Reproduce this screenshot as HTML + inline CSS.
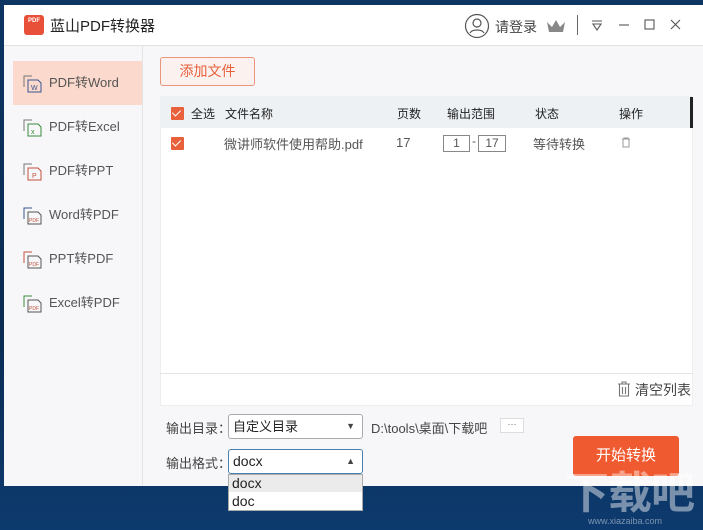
<!DOCTYPE html>
<html><head><meta charset="utf-8"><style>
*{margin:0;padding:0;box-sizing:border-box}
html,body{width:703px;height:530px;overflow:hidden}
body{background:linear-gradient(180deg,#0d3562 0%,#0a2b52 60%,#0d3a6e 100%);font-family:"Liberation Sans","Noto Sans CJK SC",sans-serif;position:relative;font-size:13px;color:#333}
.a{position:absolute}
.win{left:4px;top:5px;width:699px;height:481px;background:#f7f7f9}
.title{left:4px;top:5px;width:699px;height:41px;background:#fff;border-bottom:1px solid #e2e2e2}
.side{left:4px;top:46px;width:139px;height:440px;background:#f7f7f9;border-right:1px solid #e4e4e4}
.item{position:absolute;left:10px;width:128px;height:44px;font-size:13px;color:#555;line-height:44px;padding-left:39px}
.ic{position:absolute;left:12px;top:12px;width:21px;height:21px}
.cb{width:13px;height:13px;background:#e8603c;border-radius:1px}
.cb:after{content:"";position:absolute;left:3px;top:1px;width:4px;height:7px;border:solid #fff;border-width:0 1.5px 1.5px 0;transform:rotate(45deg)}
</style></head><body>
<div class="a win"></div>
<div class="a title"></div>
<div class="a" style="left:24px;top:15px;width:20px;height:20px;background:#e8503a;border-radius:3px;color:#fff;font-size:6px;text-align:center;line-height:12px;font-weight:bold">PDF</div>
<div class="a" style="left:50px;top:15px;font-size:15px;color:#222">蓝山PDF转换器</div>
<svg class="a" style="left:464px;top:13px" width="26" height="26" viewBox="0 0 26 26" fill="none" stroke="#555" stroke-width="1.2"><circle cx="13" cy="13" r="11.5"/><circle cx="13" cy="10" r="4"/><path d="M6 20c2-4 12-4 14 0"/></svg>
<div class="a" style="left:495px;top:17px;font-size:14px;color:#444">请登录</div>
<svg class="a" style="left:545px;top:17px" width="22" height="18" viewBox="0 0 22 18"><path d="M2 5l5 5 4-7 4 7 5-5-2 10H4z" fill="#888"/></svg>
<div class="a" style="left:577px;top:15px;width:1px;height:20px;background:#666"></div>
<svg class="a" style="left:590px;top:18px" width="100" height="14" viewBox="0 0 100 14" fill="none" stroke="#555" stroke-width="1.1"><path d="M2 3h10M3 6h8l-4 6z"/><path d="M29 7h10"/><rect x="55" y="2" width="9" height="9"/><path d="M81 2l9 9M90 2l-9 9"/></svg>
<div class="a side"></div>
<div class="a" style="left:13px;top:61px;width:129px;height:44px;background:#fbd9cc"></div>
<div class="item" style="top:61px">PDF转Word<svg class="ic" viewBox="0 0 21 21" fill="none" stroke-width="1"><path d="M2 14V3h8" stroke="#777"/><path d="M6 7h10l3 3v9H6z" stroke="#3a5590"/><text x="9" y="17" font-size="7" fill="#3a5590" stroke="none">W</text></svg></div>
<div class="item" style="top:105px">PDF转Excel<svg class="ic" viewBox="0 0 21 21" fill="none" stroke-width="1"><path d="M2 14V3h8" stroke="#777"/><path d="M6 7h10l3 3v9H6z" stroke="#3a8a3a"/><text x="9" y="17" font-size="7" fill="#3a8a3a" stroke="none">x</text></svg></div>
<div class="item" style="top:149px">PDF转PPT<svg class="ic" viewBox="0 0 21 21" fill="none" stroke-width="1"><path d="M2 14V3h8" stroke="#777"/><path d="M6 7h10l3 3v9H6z" stroke="#c0503a"/><text x="10" y="17" font-size="7" fill="#c0503a" stroke="none">P</text></svg></div>
<div class="item" style="top:193px">Word转PDF<svg class="ic" viewBox="0 0 21 21" fill="none" stroke-width="1"><path d="M2 14V3h8" stroke="#3a5590"/><path d="M6 7h10l3 3v9H6z" stroke="#555"/><text x="7" y="17" font-size="5" fill="#c0503a" stroke="none">PDF</text></svg></div>
<div class="item" style="top:237px">PPT转PDF<svg class="ic" viewBox="0 0 21 21" fill="none" stroke-width="1"><path d="M2 14V3h8" stroke="#c0503a"/><path d="M6 7h10l3 3v9H6z" stroke="#555"/><text x="7" y="17" font-size="5" fill="#c0503a" stroke="none">PDF</text></svg></div>
<div class="item" style="top:281px">Excel转PDF<svg class="ic" viewBox="0 0 21 21" fill="none" stroke-width="1"><path d="M2 14V3h8" stroke="#3a8a3a"/><path d="M6 7h10l3 3v9H6z" stroke="#555"/><text x="7" y="17" font-size="5" fill="#c0503a" stroke="none">PDF</text></svg></div>

<div class="a" style="left:160px;top:57px;width:95px;height:29px;border:1px solid #e8957a;border-radius:3px;background:#fbf1ee;color:#e8603c;font-size:14px;text-align:center;line-height:27px">添加文件</div>
<div class="a" style="left:160px;top:96px;width:533px;height:310px;background:#fff;border:1px solid #eee"></div>
<div class="a" style="left:160px;top:96px;width:531px;height:32px;background:#eef1f4"></div>
<div class="a" style="left:690px;top:97px;width:3px;height:31px;background:#222"></div>
<div class="a cb" style="left:171px;top:107px"></div>
<div class="a" style="left:191px;top:105px;font-size:12px;color:#222">全选</div>
<div class="a" style="left:225px;top:105px;font-size:12px;color:#222">文件名称</div>
<div class="a" style="left:397px;top:105px;font-size:12px;color:#222">页数</div>
<div class="a" style="left:447px;top:105px;font-size:12px;color:#222">输出范围</div>
<div class="a" style="left:535px;top:105px;font-size:12px;color:#222">状态</div>
<div class="a" style="left:619px;top:105px;font-size:12px;color:#222">操作</div>
<div class="a cb" style="left:171px;top:137px"></div>
<div class="a" style="left:224px;top:134px;font-size:13px;color:#555">微讲师软件使用帮助.pdf</div>
<div class="a" style="left:396px;top:135px;font-size:13px;color:#555">17</div>
<div class="a" style="left:443px;top:135px;width:27px;height:17px;border:1px solid #888;text-align:center;font-size:12px;line-height:15px;color:#555">1</div>
<div class="a" style="left:472px;top:134px;font-size:12px;color:#555">-</div>
<div class="a" style="left:478px;top:135px;width:28px;height:17px;border:1px solid #888;text-align:center;font-size:12px;line-height:15px;color:#555">17</div>
<div class="a" style="left:533px;top:134px;font-size:13px;color:#555">等待转换</div>
<svg class="a" style="left:621px;top:137px" width="10" height="11" viewBox="0 0 10 11" fill="none" stroke="#999"><path d="M1 2h8M3 2V1h4v1M2 2v8h6V2"/></svg>
<div class="a" style="left:160px;top:373px;width:533px;height:1px;background:#e4e4e4"></div>
<svg class="a" style="left:617px;top:381px" width="14" height="16" viewBox="0 0 14 16" fill="none" stroke="#777" stroke-width="1.1"><path d="M1 3h12M5 3V1h4v2M2.5 3v12h9V3M5.5 6v7M8.5 6v7"/></svg>
<div class="a" style="left:635px;top:380px;font-size:14px;color:#444">清空列表</div>

<div class="a" style="left:166px;top:418px;font-size:13px;color:#444">输出目录：</div>
<div class="a" style="left:228px;top:414px;width:135px;height:25px;border:1px solid #aaa;border-radius:3px;background:#fff;font-size:13px;line-height:23px;padding-left:4px;color:#222">自定义目录<span style="position:absolute;right:7px;top:0;font-size:9px;color:#444">▼</span></div>
<div class="a" style="left:371px;top:418px;font-size:13px;color:#444">D:\tools\桌面\下载吧</div>
<div class="a" style="left:500px;top:418px;width:24px;height:15px;border:1px solid #ddd;background:#fff;font-size:9px;text-align:center;line-height:11px;color:#666">···</div>
<div class="a" style="left:166px;top:453px;font-size:13px;color:#444">输出格式：</div>
<div class="a" style="left:228px;top:449px;width:135px;height:25px;border:1px solid #4a80b0;border-radius:3px;background:#fff;font-size:14px;line-height:23px;padding-left:4px;color:#222">docx<span style="position:absolute;right:7px;top:0;font-size:9px;color:#444">▲</span></div>
<div class="a" style="left:228px;top:474px;width:135px;height:37px;border:1px solid #aaa;background:#fff"></div>
<div class="a" style="left:229px;top:475px;width:133px;height:17px;background:#ebebeb"></div>
<div class="a" style="left:232px;top:475px;font-size:14px;color:#222">docx</div>
<div class="a" style="left:232px;top:493px;font-size:14px;color:#222">doc</div>
<div class="a" style="left:573px;top:436px;width:106px;height:40px;background:#f05a30;border-radius:3px;color:#fff;font-size:15px;text-align:center;line-height:40px">开始转换</div>
<div class="a" style="left:565px;top:470px;font-size:44px;line-height:48px;font-weight:bold;color:rgba(255,255,255,0.45);letter-spacing:-1px">下载吧</div>
<div class="a" style="left:588px;top:516px;font-size:9px;line-height:11px;color:rgba(255,255,255,0.45)">www.xiazaiba.com</div>
</body></html>
